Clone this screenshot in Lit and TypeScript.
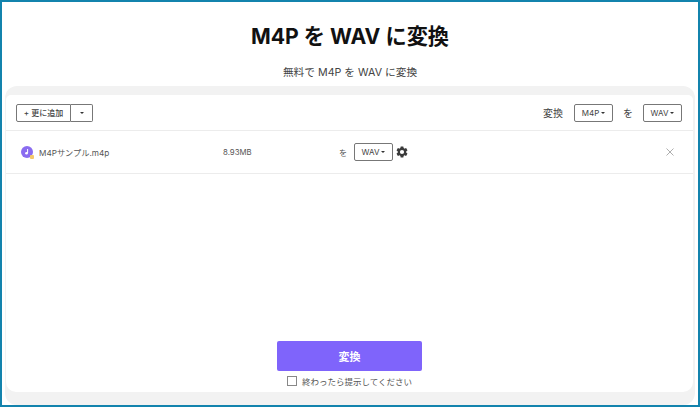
import { LitElement, html, css } from "lit";
import { customElement } from "lit/decorators.js";

const caret = html`<span class="caret"></span>`;

@customElement("app-root")
export class AppRoot extends LitElement {
  static styles = css`
    :host {
      display: block;
      width: 700px;
      height: 407px;
      box-sizing: border-box;
      border: 2px solid #1383ad;
      background: #fff;
      overflow: hidden;
      font-family: Inter, "Noto Sans CJK JP", sans-serif;
      color: #444;
    }
    .page { height: 403px; display: flex; flex-direction: column; }
    h1 {
      margin: 0;
      padding-top: 18px;
      height: 32px;
      line-height: 32px;
      text-align: center;
      font-size: 21.2px;
      font-weight: 700;
      color: #111;
    }
    .sub {
      margin: 0;
      padding-top: 10px;
      height: 20px;
      line-height: 21px;
      text-align: center;
      font-size: 10.7px;
      color: #444;
    }
    .panel {
      margin: 4px 3px 0;
      height: 319px;
      background: #f2f2f2;
      border-radius: 12px;
      padding: 9px 2px 13px 1px;
      box-sizing: border-box;
      display: flex;
    }
    .card {
      flex: 1;
      background: #fff;
      border-radius: 5px 5px 10px 10px;
      display: flex;
      flex-direction: column;
    }
    .toolbar {
      height: 35px;
      display: flex;
      align-items: center;
      padding: 0 11px 0 10px;
      border-bottom: 1px solid #ececec;
      font-size: 10px;
    }
    .group { display: flex; }
    .btn {
      height: 18px;
      box-sizing: border-box;
      border: 1px solid #777;
      border-radius: 2px;
      background: #fff;
      display: flex;
      align-items: center;
      justify-content: center;
      gap: 2px;
      font-size: 8px;
      color: #444;
    }
    .add { width: 55px; border-radius: 2px 0 0 2px; font-weight: 500; }
    .more { width: 22px; border-left: 0; border-radius: 0 2px 2px 0; }
    .fmt { width: 39px; }
    .caret {
      width: 0;
      height: 0;
      border-left: 2.5px solid transparent;
      border-right: 2.5px solid transparent;
      border-top: 2.5px solid #333;
    }
    .spacer { flex: 1; }
    .lbl1 { margin-right: 11px; }
    .lbl2 { margin: 0 10px; }
    .row {
      height: 42px;
      display: flex;
      align-items: center;
      border-bottom: 1px solid #ececec;
      font-size: 8.2px;
      color: #555;
    }
    .name { width: 202px; padding-left: 15px; display: flex; align-items: center; gap: 5px; }
    .name svg { flex: none; }
    .size { width: 116px; font-size: 7.8px; }
    .to { width: 15px; }
    .gear { margin-left: 2px; display: block; }
    .close { margin-left: auto; margin-right: 19px; display: block; }
    .fill { flex: 1; }
    .footer {
      display: flex;
      flex-direction: column;
      align-items: center;
      padding-bottom: 4px;
    }
    .convert {
      width: 145px;
      height: 30px;
      border: 0;
      border-radius: 2px;
      background: #7f64fb;
      color: #fff;
      font: inherit;
      font-size: 11px;
      font-weight: 700;
      padding: 0;
    }
    .notify {
      margin-top: 3px;
      display: flex;
      align-items: center;
      gap: 5px;
      font-size: 8.5px;
      height: 14px;
      color: #555;
    }
    .box {
      width: 8px;
      height: 8px;
      border: 1px solid #888;
      background: #fff;
    }
  `;

  render() {
    return html`
      <div class="page">
        <h1>M4P を WAV に変換</h1>
        <p class="sub">無料で M4P を WAV に変換</p>
        <div class="panel">
          <div class="card">
            <div class="toolbar">
              <div class="group">
                <div class="btn add">+ 更に追加</div>
                <div class="btn more">${caret}</div>
              </div>
              <div class="spacer"></div>
              <span class="lbl1">変換</span>
              <div class="btn fmt">M4P ${caret}</div>
              <span class="lbl2">を</span>
              <div class="btn fmt">WAV ${caret}</div>
            </div>
            <div class="row">
              <div class="name">
                <svg width="13" height="13" viewBox="0 0 13 13">
                  <circle cx="6" cy="6" r="6" fill="#8a6cf0"></circle>
                  <path d="M6.6 3v4" stroke="#fff" stroke-width="1"></path>
                  <circle cx="5.5" cy="7.2" r="1.3" fill="#fff"></circle>
                  <rect x="9" y="9" width="4" height="4" rx="1" fill="#f5c86a"></rect>
                </svg>
                <span>M4Pサンプル.m4p</span>
              </div>
              <div class="size">8.93MB</div>
              <div class="to">を</div>
              <div class="btn fmt">WAV ${caret}</div>
              <svg class="gear" width="14" height="14" viewBox="0 0 24 24">
                <path fill="#3a3a3a" d="M19.14 12.94c.04-.3.06-.61.06-.94s-.02-.64-.07-.94l2.03-1.58a.49.49 0 0 0 .12-.61l-1.92-3.32a.49.49 0 0 0-.59-.22l-2.39.96a7 7 0 0 0-1.62-.94l-.36-2.54a.48.48 0 0 0-.48-.41h-3.84a.48.48 0 0 0-.47.41l-.36 2.54c-.59.24-1.13.57-1.62.94l-2.39-.96a.49.49 0 0 0-.59.22L2.74 8.87a.48.48 0 0 0 .12.61l2.03 1.58c-.05.3-.09.63-.09.94s.02.64.07.94l-2.03 1.58a.49.49 0 0 0-.12.61l1.92 3.32c.12.22.37.29.59.22l2.39-.96c.5.38 1.03.7 1.62.94l.36 2.54c.05.24.24.41.48.41h3.84c.24 0 .44-.17.47-.41l.36-2.54c.59-.24 1.13-.56 1.62-.94l2.39.96c.22.08.47 0 .59-.22l1.92-3.32a.47.47 0 0 0-.12-.61zM12 15.6A3.6 3.6 0 1 1 12 8.4a3.6 3.6 0 0 1 0 7.2z"></path>
              </svg>
              <svg class="close" width="8" height="8" viewBox="0 0 8 8">
                <path d="M.5.5l7 7M7.5.5l-7 7" stroke="#999" stroke-width=".8" fill="none"></path>
              </svg>
            </div>
            <div class="fill"></div>
            <div class="footer">
              <button class="convert">変換</button>
              <div class="notify"><span class="box"></span><span>終わったら提示してください</span></div>
            </div>
          </div>
        </div>
      </div>
    `;
  }
}
